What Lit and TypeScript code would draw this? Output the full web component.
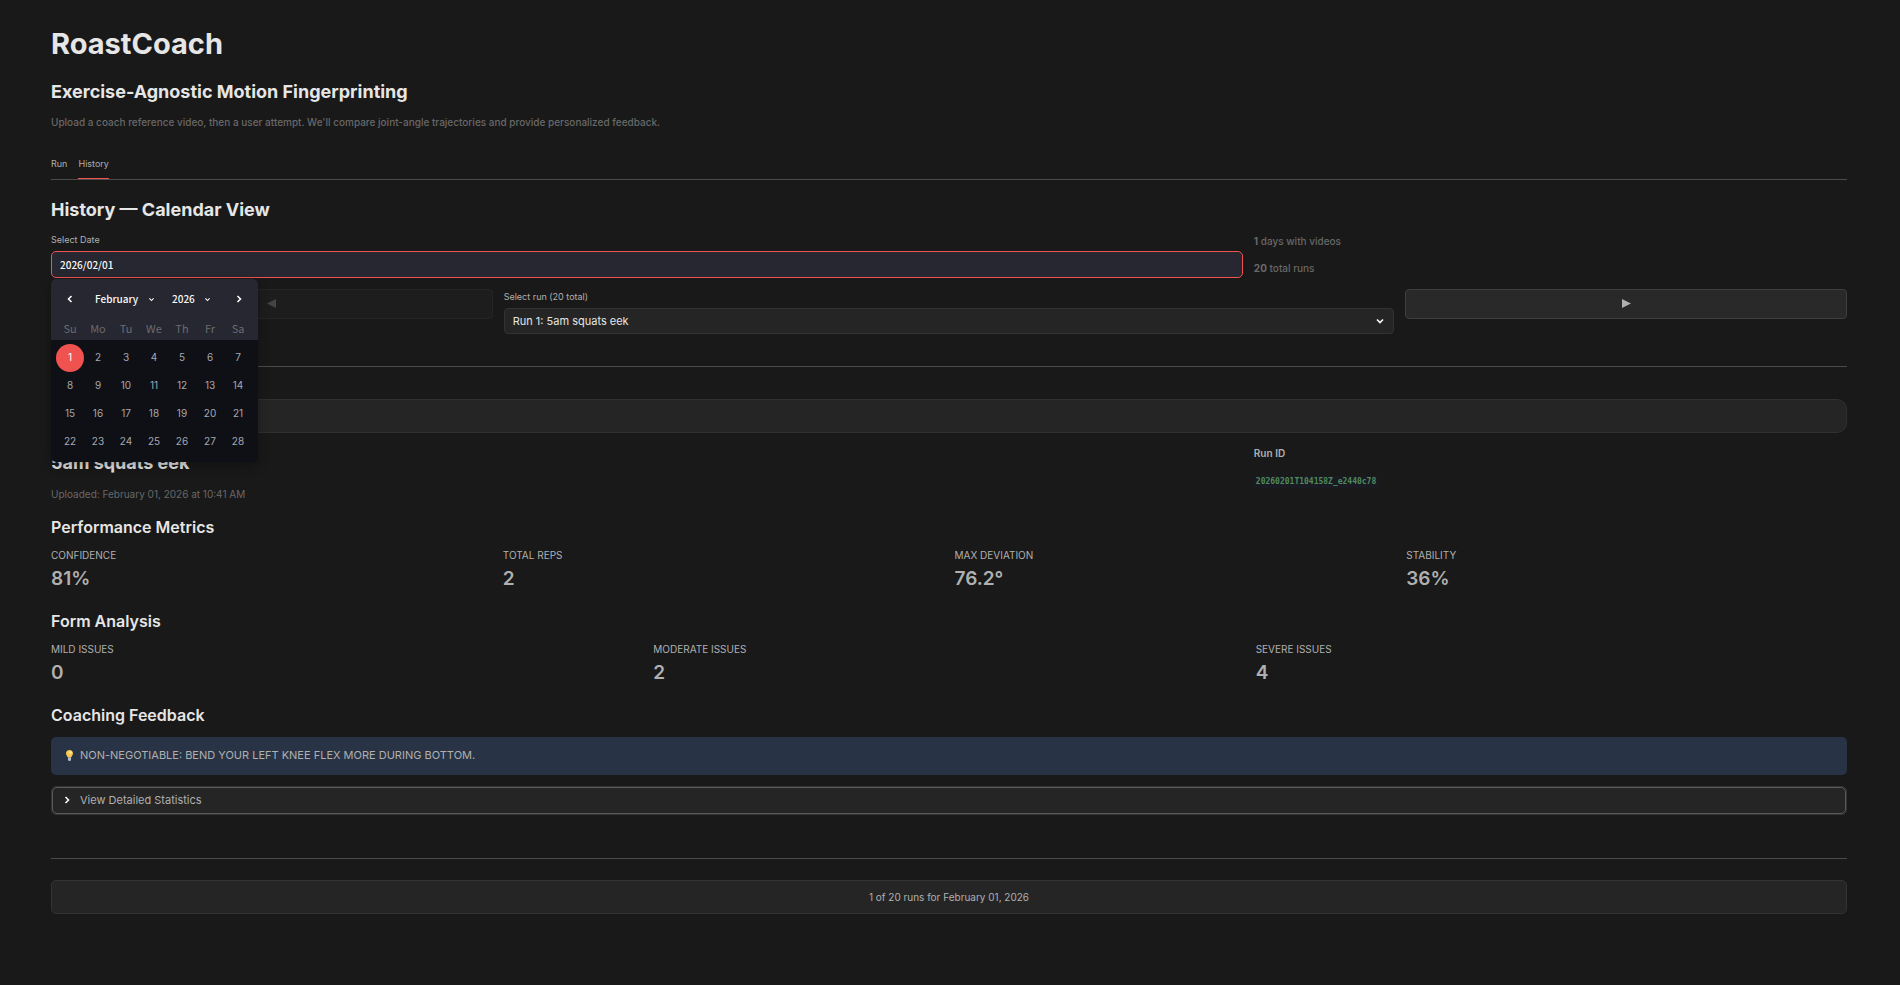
import { LitElement, html, css, svg } from "lit";
import { customElement, state } from "lit/decorators.js";

const WEEKDAYS = ["Su", "Mo", "Tu", "We", "Th", "Fr", "Sa"];
const DAYS = Array.from({ length: 28 }, (_, i) => i + 1);
const METRICS = [
  ["CONFIDENCE", "81%"],
  ["TOTAL REPS", "2"],
  ["MAX DEVIATION", "76.2°"],
  ["STABILITY", "36%"],
];
const ISSUES = [
  ["MILD ISSUES", "0"],
  ["MODERATE ISSUES", "2"],
  ["SEVERE ISSUES", "4"],
];

const chevron = (points: string) =>
  html`<svg class="chev" viewBox="0 0 10 10" aria-hidden="true">
    ${svg`<polyline points=${points} />`}
  </svg>`;
const LEFT = "6.5,2 3.5,5 6.5,8";
const RIGHT = "3.5,2 6.5,5 3.5,8";
const DOWN = "2,3.5 5,6.5 8,3.5";

@customElement("run-calendar")
export class RunCalendar extends LitElement {
  @state() private selected = 1;

  static styles = css`
    :host {
      display: block;
      width: 207px;
      border-radius: 5px;
      overflow: hidden;
      background: #0f1016;
      box-shadow: 0 4px 12px rgba(0, 0, 0, 0.3);
      font-family: "Noto Sans CJK SC", sans-serif;
    }
    button, select {
      appearance: none;
      border: 0;
      margin: 0;
      padding: 0;
      background: none;
      color: #fafafa;
      font: inherit;
    }
    .head { background: #262730; }
    .bar {
      display: flex;
      align-items: center;
      gap: 17px;
      height: 40px;
      padding: 0 11px;
    }
    .arrow { display: flex; padding: 3px; }
    .arrow:last-child { margin-left: auto; }
    .pick { display: flex; align-items: center; gap: 9px; font-size: 10px; font-weight: 500; }
    .chev {
      width: 10px;
      height: 10px;
      fill: none;
      stroke: #fafafa;
      stroke-width: 1.6;
    }
    .pick .chev { width: 7px; height: 7px; }
    .grid {
      display: grid;
      grid-template-columns: repeat(7, 28px);
      padding: 0 5px;
      text-align: center;
    }
    .week { padding-bottom: 2px; font-size: 11px; line-height: 19px; color: #6b6b70; }
    .days { padding: 4px 5px 6px; font-family: Inter, sans-serif; }
    .day {
      height: 28px;
      padding-bottom: 3px;
      border-radius: 50%;
      font-size: 10px;
      color: #a5a8b0;
    }
    .day.on { background: #f0524f; color: #fff; }
  `;

  render() {
    return html`
      <div class="head">
        <div class="bar">
          <button class="arrow" aria-label="Previous month">${chevron(LEFT)}</button>
          <div class="pick">
            <select aria-label="Month"><option>February</option></select>${chevron(DOWN)}
          </div>
          <div class="pick">
            <select aria-label="Year"><option>2026</option></select>${chevron(DOWN)}
          </div>
          <button class="arrow" aria-label="Next month">${chevron(RIGHT)}</button>
        </div>
        <div class="grid week">${WEEKDAYS.map((d) => html`<span>${d}</span>`)}</div>
      </div>
      <div class="grid days">
        ${DAYS.map(
          (d) => html`<button
            class="day ${d === this.selected ? "on" : ""}"
            @click=${() => (this.selected = d)}
          >${d}</button>`,
        )}
      </div>
    `;
  }
}

@customElement("app-root")
export class AppRoot extends LitElement {
  static styles = css`
    :host {
      display: block;
      box-sizing: border-box;
      min-height: 100vh;
      padding: 23px 53px 72px 51px;
      background: #191919;
      color: #b0b0b0;
      font-family: Inter, sans-serif;
      font-size: 10px;
      line-height: 16px;
    }
    *, *::before { box-sizing: border-box; }
    h1, h2, h3, p { margin: 0; }
    h1, h2, h3 { color: #e6e6e6; font-weight: 600; }
    h1 { font-size: 29px; line-height: 42px; font-weight: 700; }
    h2 { font-size: 18px; line-height: 24px; font-weight: 700; }
    h3 { font-size: 16px; line-height: 20px; }
    .subtitle { margin-top: 15px; }
    .muted { color: #686868; }
    .intro { margin-top: 10px; font-weight: 500; }
    .tabs {
      display: flex;
      gap: 11px;
      margin-top: 25px;
      border-bottom: 1px solid #4b4b4b;
    }
    .tab {
      appearance: none;
      height: 24px;
      padding: 0 0 5px;
      border: 0;
      border-bottom: 1px solid transparent;
      background: none;
      color: #b0b0b0;
      font: 400 9px/16px Inter, sans-serif;
    }
    .tab.on { border-color: #f0524f; }
    .view { margin-top: 18px; }
    .row { display: flex; gap: 11px; }
    .third { flex: 1 1 calc(33.333% - 11px); }
    .two-thirds { flex: 1 1 calc(66.667% - 11px); min-width: 0; }
    .quarter { flex: 1 1 calc(25% - 11px); }
    .half { flex: 1 1 calc(50% - 11px); padding-top: 1px; }
    .label { display: block; font-size: 9px; line-height: 14px; }
    .date-row { margin-top: 11px; }
    .date { position: relative; }
    .date input {
      display: block;
      width: 100%;
      height: 27px;
      margin-top: 4px;
      padding: 0 8px;
      border: 1px solid #f0524f;
      border-radius: 5px;
      background: #262730;
      color: #fafafa;
      font: 500 10px "Noto Sans CJK SC", sans-serif;
      outline: none;
    }
    run-calendar { position: absolute; left: 0; top: 46px; z-index: 2; }
    .counts { display: flex; flex-direction: column; gap: 11px; font-weight: 500; }
    .nav-row { margin-top: 11px; align-items: flex-start; }
    .step {
      appearance: none;
      display: flex;
      align-items: center;
      justify-content: center;
      height: 30px;
      padding-bottom: 2px;
      border: 1px solid #3e3e3e;
      border-radius: 4px;
      background: #292929;
      color: #b0b0b0;
    }
    .step svg { width: 9px; height: 9px; fill: currentColor; }
    .step:disabled { border-color: #252525; background: #1d1d1d; color: #444; }
    .select { position: relative; display: flex; margin-top: 4px; }
    .select select {
      appearance: none;
      width: 100%;
      height: 26px;
      padding: 0 8px;
      border: 1px solid #333;
      border-radius: 4px;
      background: #252525;
      color: #e6e6e6;
      font: 400 11px Inter, sans-serif;
    }
    .select .chev { position: absolute; right: 9px; top: 8px; }
    .chev {
      width: 10px;
      height: 10px;
      fill: none;
      stroke: #fafafa;
      stroke-width: 1.6;
    }
    hr { height: 1px; margin: 0; border: 0; background: #4b4b4b; }
    .nav-rule { margin-top: 32px; }
    .card {
      height: 34px;
      margin-top: 32px;
      border: 1px solid #303030;
      border-radius: 10px;
      background: #252525;
    }
    .run-row { margin-top: 12px; }
    .run-name { margin-top: 6px; line-height: 24px; font-size: 18px; font-weight: 700; }
    .uploaded { margin-top: 11px; }
    .run-id { font-weight: 600; }
    .run-row code {
      display: inline-block;
      margin-top: 15px;
      padding: 0 2px;
      border-radius: 3px;
      background: #1a1a22;
      color: #4f8a5b;
      font: 700 8px/12px "DejaVu Sans Mono", monospace;
    }
    .perf { margin-top: 15px; }
    .metrics {
      display: grid;
      grid-auto-flow: column;
      grid-auto-columns: 1fr;
      gap: 11px;
      margin: 11px 0 0;
    }
    .metrics dt { font-size: 10px; line-height: 14px; }
    .metrics dd { margin: 5px 0 0; font-size: 19px; line-height: 24px; font-weight: 600; }
    .section { margin-top: 20px; }
    .alert {
      display: flex;
      align-items: center;
      gap: 7px;
      height: 38px;
      margin-top: 12px;
      padding: 0 15px 2px;
      border-radius: 5px;
      background: #283445;
      font-size: 11px;
    }
    .bulb { width: 7px; height: 11px; }
    details {
      margin-top: 11px;
      padding: 1px;
      border: 1px solid #333;
      border-radius: 5px;
      background: #252525;
      font-size: 11px;
    }
    summary {
      display: flex;
      align-items: center;
      gap: 8px;
      height: 27px;
      margin: -1px;
      padding: 0 9px 1px;
      border: 1px solid #5a5a5a;
      border-radius: 5px;
      list-style: none;
    }
    .foot-rule { margin-top: 43px; }
    .foot {
      margin-top: 21px;
      padding: 8px;
      border: 1px solid #333;
      border-radius: 5px;
      background: #252525;
      text-align: center;
    }
  `;

  private stats(items: string[][]) {
    return html`<dl class="metrics">
      ${items.map(([k, v]) => html`<div><dt>${k}</dt><dd>${v}</dd></div>`)}
    </dl>`;
  }

  render() {
    return html`
      <header>
        <h1>RoastCoach</h1>
        <h2 class="subtitle">Exercise-Agnostic Motion Fingerprinting</h2>
        <p class="intro muted">Upload a coach reference video, then a user attempt. We'll compare joint-angle trajectories and provide personalized feedback.</p>
      </header>
      <nav class="tabs" role="tablist">
        <button class="tab" role="tab">Run</button>
        <button class="tab on" role="tab" aria-selected="true">History</button>
      </nav>
      <main class="view">
        <h2>History — Calendar View</h2>
        <div class="row date-row">
          <div class="two-thirds date">
            <label class="label" for="date">Select Date</label>
            <input id="date" type="text" value="2026/02/01" />
            <run-calendar></run-calendar>
          </div>
          <div class="third counts muted">
            <p><strong>1</strong> days with videos</p>
            <p><strong>20</strong> total runs</p>
          </div>
        </div>
        <div class="row nav-row">
          <button class="step quarter" disabled aria-label="Previous run">
            <svg viewBox="0 0 9 9"><path d="M9 0V9L0 4.5Z" /></svg>
          </button>
          <div class="half">
            <label class="label" for="run">Select run (20 total)</label>
            <div class="select">
              <select id="run"><option>Run 1: 5am squats eek</option></select>
              ${chevron(DOWN)}
            </div>
          </div>
          <button class="step quarter" aria-label="Next run">
            <svg viewBox="0 0 9 9"><path d="M0 0V9L9 4.5Z" /></svg>
          </button>
        </div>
        <hr class="nav-rule" />
        <div class="card"></div>
        <div class="row run-row">
          <div class="two-thirds">
            <h3 class="run-name">5am squats eek</h3>
            <p class="uploaded muted">Uploaded: February 01, 2026 at 10:41 AM</p>
          </div>
          <div class="third">
            <p class="run-id">Run ID</p>
            <code>20260201T104158Z_e2440c78</code>
          </div>
        </div>
        <h3 class="perf">Performance Metrics</h3>
        ${this.stats(METRICS)}
        <h3 class="section">Form Analysis</h3>
        ${this.stats(ISSUES)}
        <h3 class="section">Coaching Feedback</h3>
        <div class="alert" role="status">
          <svg class="bulb" viewBox="0 0 7 11" aria-hidden="true">
            <path d="M3.5 0C1.4 0 0 1.5 0 3.4C0 5 1.4 5.8 1.8 7.6H5.2C5.6 5.8 7 5 7 3.4C7 1.5 5.6 0 3.5 0Z" fill="#fcc94f" />
            <circle cx="4.6" cy="2.4" r="1.1" fill="#fff3b8" />
            <path d="M2 7.6H5V10L4.2 11H2.8L2 10Z" fill="#b5bcc4" />
          </svg>
          <span>NON-NEGOTIABLE: BEND YOUR LEFT KNEE FLEX MORE DURING BOTTOM.</span>
        </div>
        <details>
          <summary>${chevron(RIGHT)}<span>View Detailed Statistics</span></summary>
        </details>
        <hr class="foot-rule" />
        <footer class="foot">1 of 20 runs for February 01, 2026</footer>
      </main>
    `;
  }
}
